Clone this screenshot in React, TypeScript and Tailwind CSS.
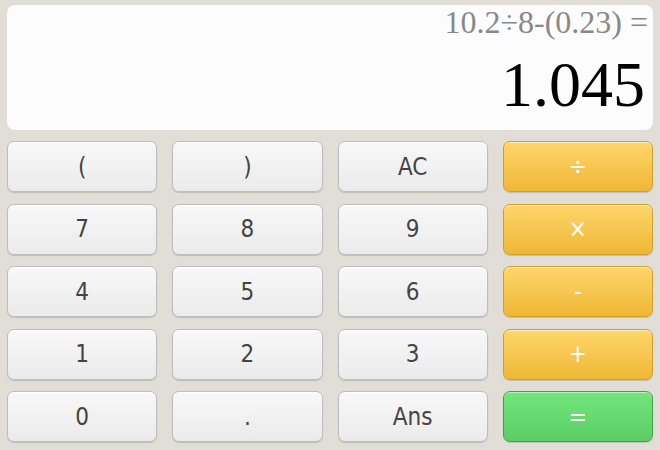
import React from 'react'

type Kind = 'gray' | 'op' | 'eq'

const keys: { label: string; kind: Kind }[] = [
  { label: '(', kind: 'gray' },
  { label: ')', kind: 'gray' },
  { label: 'AC', kind: 'gray' },
  { label: '÷', kind: 'op' },
  { label: '7', kind: 'gray' },
  { label: '8', kind: 'gray' },
  { label: '9', kind: 'gray' },
  { label: '×', kind: 'op' },
  { label: '4', kind: 'gray' },
  { label: '5', kind: 'gray' },
  { label: '6', kind: 'gray' },
  { label: '-', kind: 'op' },
  { label: '1', kind: 'gray' },
  { label: '2', kind: 'gray' },
  { label: '3', kind: 'gray' },
  { label: '+', kind: 'op' },
  { label: '0', kind: 'gray' },
  { label: '.', kind: 'gray' },
  { label: 'Ans', kind: 'gray' },
  { label: '=', kind: 'eq' },
]

const styles: Record<Kind, string> = {
  gray: 'bg-gradient-to-b from-[#f8f8f8] to-[#ebebeb] border-[#bdbdbd] text-[#444444] shadow-[inset_0_1px_0_#ffffff,0_1px_1px_rgba(0,0,0,0.15)]',
  op: 'bg-gradient-to-b from-[#fed669] to-[#efb733] border-[#d3a027] text-white shadow-[inset_0_1px_0_rgba(255,255,255,0.55),0_1px_1px_rgba(0,0,0,0.15)]',
  eq: 'bg-gradient-to-b from-[#72e67c] to-[#5ccd66] border-[#3fa541] text-white shadow-[inset_0_1px_0_rgba(255,255,255,0.5),0_1px_1px_rgba(0,0,0,0.15)]',
}

export default function App() {
  return (
    <main className="min-h-[450px] w-[660px] bg-[#e1ded8] px-[7px] pt-[5px] overflow-hidden">
      {/* display */}
      <div className="h-[125px] rounded-[8px] bg-[#fcfcfc] flex flex-col items-end pr-[5px] pt-[1px] font-['Liberation_Serif','Times_New_Roman',serif]">
        <div className="text-[32px] leading-none text-[#888888]">10.2÷8-(0.23) =</div>
        <div className="mt-[15px] mr-[3px] text-[64px] leading-none text-black">1.045</div>
      </div>

      <div className="mt-[11px] grid grid-cols-4 gap-x-[15px] gap-y-[11.5px]">
        {keys.map((k) => (
          <button
            key={k.label}
            className={`h-[51px] rounded-[7px] border-[1.5px] flex items-center justify-center text-[24px] font-['DejaVu_Sans_Condensed','DejaVu_Sans',sans-serif] ${styles[k.kind]}`}
          >
            {k.label}
          </button>
        ))}
      </div>
    </main>
  )
}
